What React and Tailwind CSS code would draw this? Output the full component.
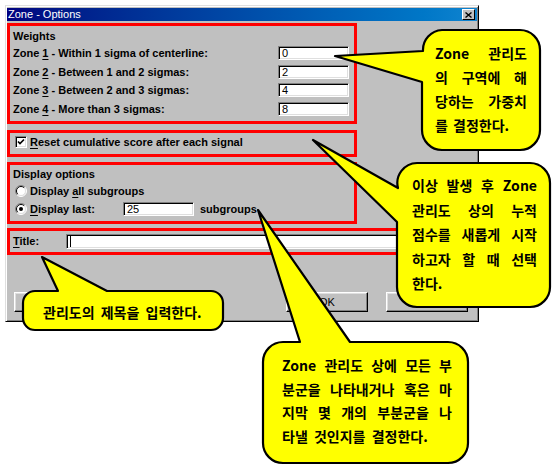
import React from 'react';

const ui = "font-['Liberation_Sans',Arial,sans-serif]";
const ko = "font-['Noto_Sans_CJK_KR','Noto_Sans',sans-serif]";

// sunken win98 edit box
const Field = ({ children, className = '' }) => (
  <div
    className={`h-[14px] shrink-0 bg-white border border-t-[#808080] border-l-[#808080] border-b-white border-r-white shadow-[inset_1px_1px_0_#000,inset_-1px_-1px_0_#dfdfdf] pl-[3px] text-[11px] leading-[12px] font-normal text-black ${className}`}
  >
    {children}
  </div>
);

const Radio = ({ checked }) => (
  <svg width="12" height="12" viewBox="0 0 12 12" className="shrink-0">
    <circle cx="6" cy="6" r="5" fill="#fff" />
    <path d="M2.1 9.9 A5.5 5.5 0 0 1 9.9 2.1" stroke="#808080" fill="none" />
    <path d="M9.9 2.1 A5.5 5.5 0 0 1 2.1 9.9" stroke="#fff" fill="none" />
    <path d="M2.8 9.2 A4.5 4.5 0 0 1 9.2 2.8" stroke="#000" fill="none" />
    <path d="M9.2 2.8 A4.5 4.5 0 0 1 2.8 9.2" stroke="#dfdfdf" fill="none" />
    {checked && <circle cx="6" cy="6" r="2" fill="#000" />}
  </svg>
);

const Check = () => (
  <div className="w-[12px] h-[12px] shrink-0 bg-white border border-t-[#808080] border-l-[#808080] border-b-white border-r-white shadow-[inset_1px_1px_0_#000,inset_-1px_-1px_0_#dfdfdf] flex items-center justify-center">
    <svg width="8" height="8" viewBox="0 0 8 8">
      <path d="M1 3.5 L3 5.5 L7 1.5" stroke="#000" strokeWidth="1.7" fill="none" />
    </svg>
  </div>
);

const Btn = ({ children, className = '' }) => (
  <div
    className={`h-[20px] w-[82px] shrink-0 bg-[#c0c0c0] border border-t-white border-l-white border-r-black border-b-black shadow-[inset_-1px_-1px_0_#808080,inset_1px_1px_0_#dfdfdf] flex items-center justify-center text-[11px] font-normal text-black ${className}`}
  >
    {children}
  </div>
);

const zones = [
  { n: '1', label: ' - Within 1 sigma of centerline:', value: '0' },
  { n: '2', label: ' - Between 1 and 2 sigmas:', value: '2' },
  { n: '3', label: ' - Between 2 and 3 sigmas:', value: '4' },
  { n: '4', label: ' - More than 3 sigmas:', value: '8' },
];

const line = 'whitespace-nowrap text-justify [text-align-last:justify]';

export default function App() {
  return (
    <div className={`relative w-[554px] h-[468px] overflow-hidden bg-white ${ui}`}>
      {/* dialog */}
      <div className="ml-[5px] mt-[5px] w-[474px] h-[317px] bg-[#c0c0c0] border border-t-[#dfdfdf] border-l-[#dfdfdf] border-r-black border-b-black p-px shadow-[inset_1px_1px_0_#fff,inset_-1px_-1px_0_#808080]">
        <div className="mt-px h-[13px] flex items-center bg-linear-to-r from-[#000080] to-[#1084d0]">
          <span className="pl-px text-[11px] leading-none text-white">Zone - Options</span>
          <div className="ml-auto mr-[2px] w-[13px] h-[11px] bg-[#c0c0c0] border border-t-white border-l-white border-r-black border-b-black flex items-center justify-center">
            <svg width="7" height="6" viewBox="0 0 7 6">
              <path d="M0.5 0.5 L6.5 5.5 M6.5 0.5 L0.5 5.5" stroke="#000" strokeWidth="1.4" />
            </svg>
          </div>
        </div>

        {/* weights */}
        <div className="mt-[2px] w-[350px] h-[101px] border-[3px] border-[#ff0000] flex flex-col pl-[3px] pr-[5px] text-[11px] font-bold text-black">
          <div className="h-[20px] flex items-center">Weights</div>
          {zones.map((z) => (
            <div key={z.n} className="h-[18.5px] flex items-start">
              <div className="h-[14px] leading-[14px] whitespace-pre">
                Zone <span className="underline underline-offset-[2px]">{z.n}</span>
                {z.label}
              </div>
              <Field className="ml-auto w-[71px]">{z.value}</Field>
            </div>
          ))}
        </div>

        {/* reset */}
        <div className="mt-[6px] w-[350px] h-[27px] border-[3px] border-[#ff0000] flex items-start pt-[3px] pl-[5px] gap-[3px] text-[11px] font-bold text-black">
          <Check />
          <span className="leading-[12px]">
            <span className="underline underline-offset-[2px]">R</span>eset cumulative score after each signal
          </span>
        </div>

        {/* display options */}
        <div className="mt-[5px] w-[350px] h-[62px] border-[3px] border-[#ff0000] flex flex-col pl-[3px] text-[11px] font-bold text-black">
          <div className="h-[18px] flex items-center">Display options</div>
          <div className="h-[16px] flex items-center pl-[2px] gap-[3px]">
            <Radio />
            <span>
              Display <span className="underline underline-offset-[2px]">a</span>ll subgroups
            </span>
          </div>
          <div className="mt-[3px] h-[14px] flex items-center pl-[2px]">
            <Radio checked />
            <span className="ml-[3px] w-[93px]">
              <span className="underline underline-offset-[2px]">D</span>isplay last:
            </span>
            <Field className="w-[71px] text-[#303030]">25</Field>
            <span className="ml-[6px]">subgroups</span>
          </div>
        </div>

        {/* title */}
        <div className="mt-[4px] w-[466px] h-[27px] border-[3px] border-[#ff0000] flex items-center pl-[3px] pr-[3px] text-[11px] font-bold text-black">
          <span className="w-[53px] shrink-0">
            <span className="underline underline-offset-[2px]">T</span>itle:
          </span>
          <Field className="flex-1 h-[15px] flex items-center">
            <span className="block w-px h-[11px] bg-black" />
          </Field>
        </div>

        <div className="mt-[37px] flex pl-[7px]">
          <Btn />
          <Btn className="ml-[190px]">OK</Btn>
          <Btn className="ml-[18px]" />
        </div>
      </div>

      {/* callouts */}
      <svg className="absolute left-0 top-0" width="554" height="468" viewBox="0 0 554 468">
        <g fill="#ffff00" stroke="#000" strokeWidth="2.2" strokeLinejoin="round">
          <path d="M442 30 H520 A20 20 0 0 1 540 50 V130 A20 20 0 0 1 520 150 H442 A20 20 0 0 1 422 130 V82 L335 56 L423 51 A20 20 0 0 1 442 30 Z" />
          <path d="M417 163 H530 A20 20 0 0 1 550 183 V287 A20 20 0 0 1 530 307 H417 A20 20 0 0 1 397 287 V222 L313 140 L398 188 A20 20 0 0 1 417 163 Z" />
          <path d="M35 291 H58 L42 257 L107 291 H211 A12 12 0 0 1 223 303 V318 A12 12 0 0 1 211 330 H35 A12 12 0 0 1 23 318 V303 A12 12 0 0 1 35 291 Z" />
          <path d="M283 342 H300 L258 210 L350 342 H448 A20 20 0 0 1 468 362 V443 A20 20 0 0 1 448 463 H283 A20 20 0 0 1 263 443 V362 A20 20 0 0 1 283 342 Z" />
        </g>
      </svg>

      <div className={`absolute left-[435px] top-[41px] w-[92px] ${ko} text-[14px] font-bold leading-[24px] text-black`}>
        <div className={line}>Zone 관리도</div>
        <div className={line}>의 구역에 해</div>
        <div className={line}>당하는 가중치</div>
        <div className="whitespace-nowrap [word-spacing:2px]">를 결정한다.</div>
      </div>

      <div className={`absolute left-[412px] top-[173px] w-[125px] ${ko} text-[14px] font-bold leading-[24.5px] text-black`}>
        <div className={line}>이상 발생 후 Zone</div>
        <div className={line}>관리도 상의 누적</div>
        <div className={line}>점수를 새롭게 시작</div>
        <div className={line}>하고자 할 때 선택</div>
        <div className="whitespace-nowrap">한다.</div>
      </div>

      <div className={`absolute left-[43px] top-[300px] ${ko} text-[14px] font-bold leading-[24px] text-black whitespace-nowrap [word-spacing:3px]`}>
        관리도의 제목을 입력한다.
      </div>

      <div className={`absolute left-[282px] top-[354px] w-[170px] ${ko} text-[14px] font-bold leading-[23.6px] text-black`}>
        <div className={line}>Zone 관리도 상에 모든 부</div>
        <div className={line}>분군을 나타내거나 혹은 마</div>
        <div className={line}>지막 몇 개의 부분군을 나</div>
        <div className="whitespace-nowrap [word-spacing:3px]">타낼 것인지를 결정한다.</div>
      </div>
    </div>
  );
}
